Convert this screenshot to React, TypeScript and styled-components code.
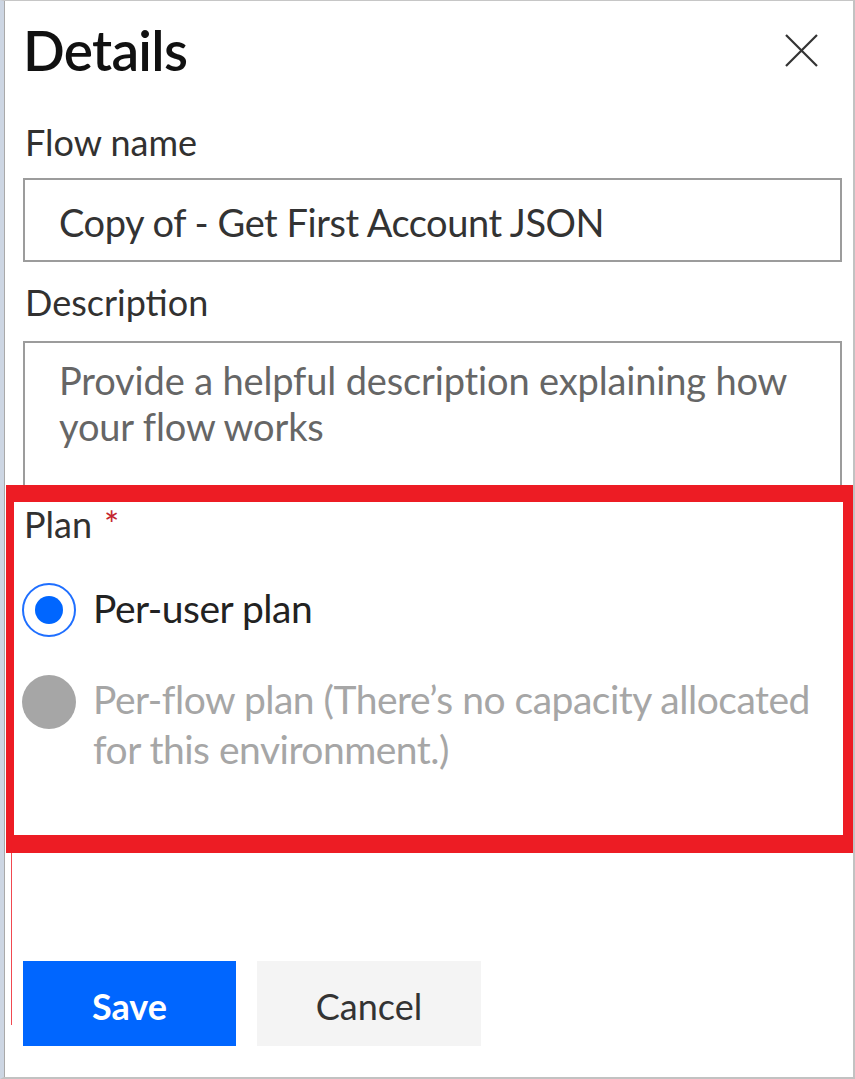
import React from "react";
import styled, { createGlobalStyle } from "styled-components";

const Global = createGlobalStyle`
  html, body { margin: 0; padding: 0; background: #ffffff; }
  body { font-family: Lato, "Open Sans", "Liberation Sans", sans-serif; }
  * { box-sizing: border-box; }
`;

const Frame = styled.div`
  width: 855px;
  height: 1079px;
  background: #ffffff;
  border-top: 1px solid #c6c6c6;
  border-right: 2px solid #c2c2c2;
  border-bottom: 2px solid #c2c2c2;
  border-left: 4px solid #cdd6e3;
  box-shadow: inset 1px 0 0 #a9a9a9;
  display: flex;
  flex-direction: column;
  padding: 16px 11px 0 19px;
  position: relative;
`;

const Header = styled.div`
  display: flex;
  align-items: center;
  justify-content: space-between;
  height: 66px;
  padding-right: 24px;
`;

const Title = styled.h1`
  margin: 0;
  font-size: 55px;
  line-height: 66px;
  font-weight: 600;
  letter-spacing: -0.7px;
  color: #111111;
`;

const CloseButton = styled.button`
  border: 0;
  background: transparent;
  padding: 0;
  width: 33px;
  height: 33px;
  display: flex;
  cursor: pointer;
`;

const Label = styled.label<{ $top: number }>`
  display: block;
  margin: ${(p) => p.$top}px 0 0 2px;
  font-size: 36px;
  line-height: 44px;
  color: #323130;
`;

const Required = styled.span`
  color: #c4262e;
  margin-left: 12px;
`;

const TextInput = styled.input`
  display: block;
  width: 100%;
  height: 84px;
  margin-top: 14px;
  border: 2px solid #9c9c9c;
  padding: 4px 34px 0;
  font-family: inherit;
  font-size: 38px;
  letter-spacing: -0.45px;
  color: #333333;
  background: #ffffff;
  outline: none;
`;

const TextArea = styled.textarea`
  display: block;
  width: 100%;
  height: 144px;
  margin-top: 17px;
  border: 2px solid #9c9c9c;
  border-bottom: 0;
  padding: 14px 34px 0;
  font-family: inherit;
  font-size: 38px;
  line-height: 46px;
  letter-spacing: -0.15px;
  color: #333333;
  resize: none;
  outline: none;
  overflow: hidden;
  &::placeholder { color: #666666; }
`;

const Highlight = styled.section`
  position: relative;
  margin: 0 -11px 0 -17px;
  border-style: solid;
  border-color: #ed1c24;
  border-width: 17px 10px 18px 8px;
  padding: 0 6px 61px 8px;
  &::after {
    content: "";
    position: absolute;
    left: -3px;
    top: 100%;
    width: 1px;
    height: 190px;
    background: #ed1c24;
    opacity: 0.8;
  }
`;

const PlanLabel = styled.div`
  margin-left: 2px;
  font-size: 36px;
  line-height: 44px;
  color: #323130;
`;

const Options = styled.div`
  display: flex;
  flex-direction: column;
  gap: 37px;
  margin-top: 37px;
`;

const Option = styled.label<{ $disabled?: boolean }>`
  display: flex;
  align-items: flex-start;
  gap: 17px;
  font-size: 39px;
  line-height: 50px;
  letter-spacing: -0.5px;
  color: ${(p) => (p.$disabled ? "#a6a6a6" : "#222222")};
`;

const Radio = styled.span<{ $checked?: boolean; $disabled?: boolean }>`
  flex: none;
  width: 54px;
  height: 54px;
  border-radius: 50%;
  margin-top: ${(p) => (p.$disabled ? 1 : 0)}px;
  display: flex;
  align-items: center;
  justify-content: center;
  background: ${(p) => (p.$disabled ? "#a6a6a6" : "#ffffff")};
  border: ${(p) => (p.$disabled ? "0" : "2px solid #1f6fff")};
  &::after {
    content: "";
    display: ${(p) => (p.$checked ? "block" : "none")};
    width: 28px;
    height: 28px;
    border-radius: 50%;
    background: #0066ff;
  }
`;

const OptionText = styled.span`
  flex: 1;
`;

const Footer = styled.div`
  display: flex;
  gap: 21px;
  margin: 108px 0 0 0;
`;

const Button = styled.button<{ $primary?: boolean }>`
  height: 85px;
  padding: 5px 0 0;
  border: 0;
  font-family: inherit;
  font-size: 36px;
  font-weight: ${(p) => (p.$primary ? 700 : 400)};
  color: ${(p) => (p.$primary ? "#ffffff" : "#333333")};
  background: ${(p) => (p.$primary ? "#0066ff" : "#f4f4f4")};
  width: ${(p) => (p.$primary ? 213 : 224)}px;
  cursor: pointer;
`;

export default function App() {
  return (
    <>
      <Global />
      <Frame>
        <Header>
          <Title>Details</Title>
          <CloseButton aria-label="Close">
            <svg width="33" height="33" viewBox="0 0 33 33">
              <path d="M1 1 L32 32 M32 1 L1 32" stroke="#333" strokeWidth="2.2" fill="none" />
            </svg>
          </CloseButton>
        </Header>
        <Label $top={37}>Flow name</Label>
        <TextInput readOnly value="Copy of - Get First Account JSON" />
        <Label $top={18}>Description</Label>
        <TextArea placeholder="Provide a helpful description explaining how your flow works" />
        <Highlight>
          <PlanLabel>
            Plan<Required>*</Required>
          </PlanLabel>
          <Options>
            <Option>
              <Radio $checked />
              <OptionText>Per-user plan</OptionText>
            </Option>
            <Option $disabled>
              <Radio $disabled />
              <OptionText>Per-flow plan (There’s no capacity allocated for this environment.)</OptionText>
            </Option>
          </Options>
        </Highlight>
        <Footer>
          <Button $primary>Save</Button>
          <Button>Cancel</Button>
        </Footer>
      </Frame>
    </>
  );
}
